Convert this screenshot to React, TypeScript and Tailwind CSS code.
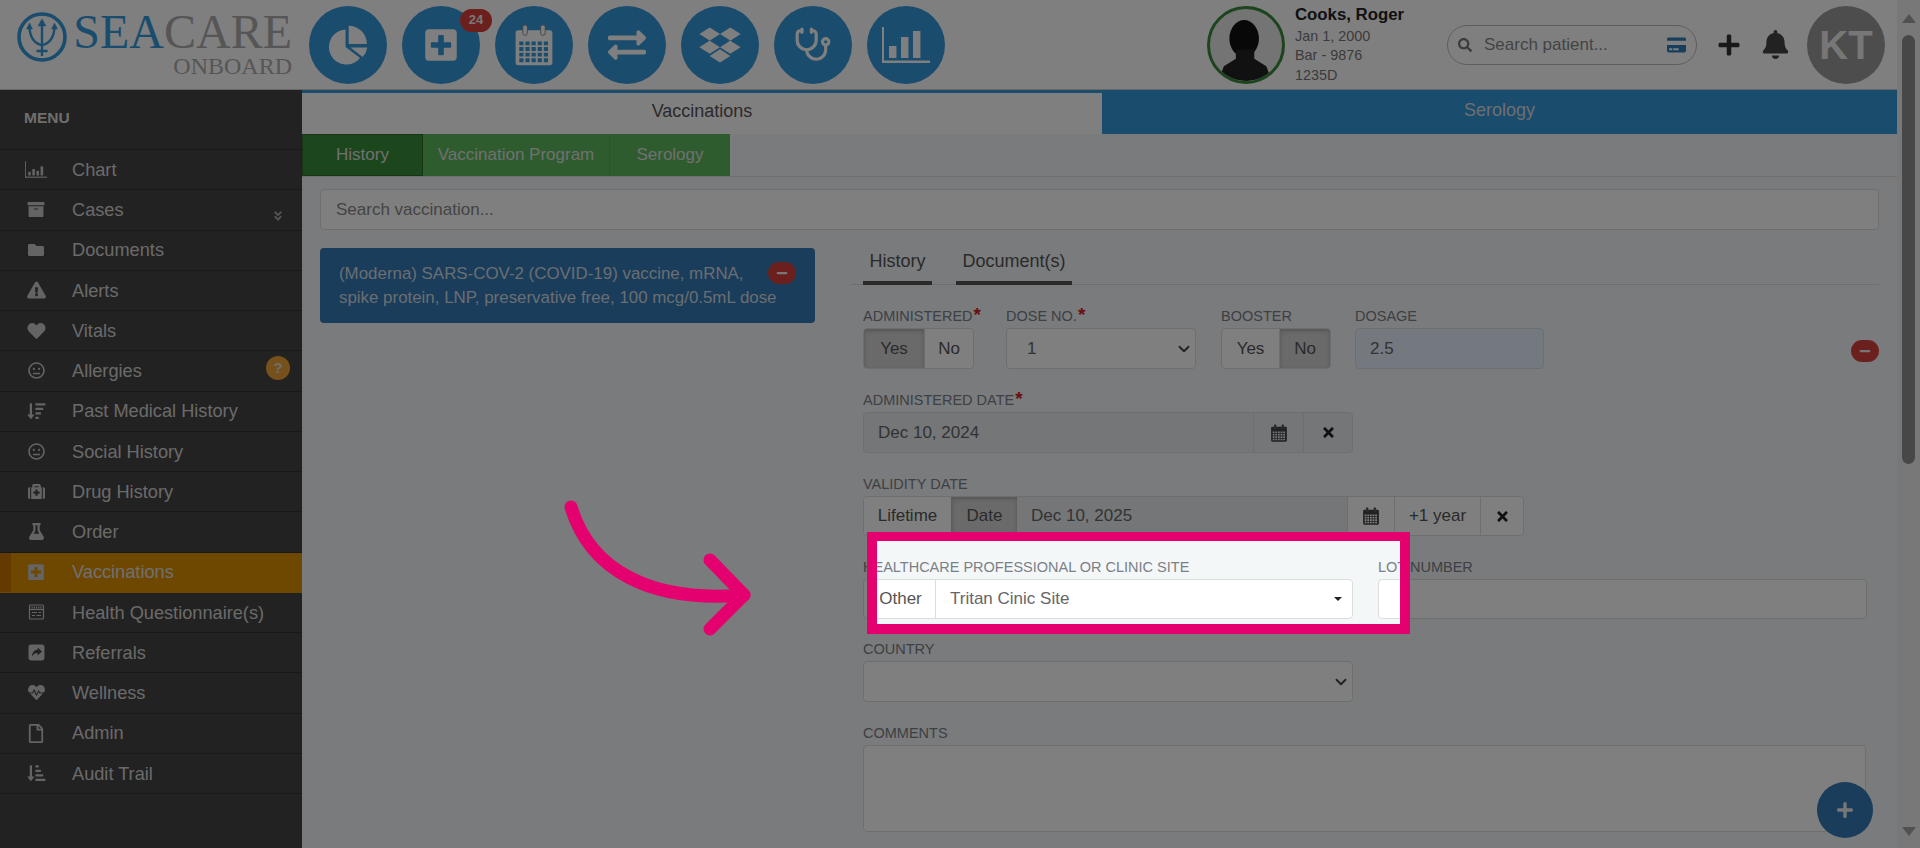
import type { ReactNode } from "react"
import { ChevronDown, Stethoscope } from "lucide-react"
import {
  FaAngleDoubleDown,
  FaArchive,
  FaBell,
  FaCreditCard,
  FaDropbox,
  FaExchangeAlt,
  FaExclamationTriangle,
  FaFlask,
  FaFolder,
  FaHeart,
  FaHeartbeat,
  FaMedkit,
  FaMinus,
  FaPlus,
  FaPlusSquare,
  FaRegFile,
  FaRegMeh,
  FaSearch,
  FaSortAmountDown,
  FaSortAmountDownAlt,
  FaTimes,
} from "react-icons/fa"

function gridHoles() {
  let d = ""
  for (let r = 0; r < 4; r++) {
    for (let c = 0; c < 5; c++) {
      const x = 3.6 + c * 3.5
      const y = 10 + r * 3.2
      d += `M${x} ${y}h2.4v2.2h-2.4z`
    }
  }
  return d
}

function CalendarIcon({ className }: { className?: string }) {
  return (
    <svg viewBox="0 0 24 24" className={className} fill="currentColor">
      <path fillRule="evenodd" d={`M3 3.5h18a1.5 1.5 0 0 1 1.5 1.5v17a1.5 1.5 0 0 1-1.5 1.5H3A1.5 1.5 0 0 1 1.5 22V5A1.5 1.5 0 0 1 3 3.5z${gridHoles()}`} />
      <rect x="5.6" y="0.5" width="2.6" height="6" rx="1.3" stroke="#888" strokeWidth="0.5" />
      <rect x="15.8" y="0.5" width="2.6" height="6" rx="1.3" stroke="#888" strokeWidth="0.5" />
    </svg>
  )
}

function PieIcon({ className }: { className?: string }) {
  return (
    <svg viewBox="0 0 24 24" className={className} fill="currentColor">
      <path d="M10.6 3.2A10 10 0 1 0 18.9 19.4L10.6 13.2Z" />
      <path d="M12.4 1A10.4 10.4 0 0 1 22.8 11.4H12.4Z" />
      <path d="M13.4 13.4H23A10.4 10.4 0 0 1 20.4 18.8Z" />
    </svg>
  )
}

function BarsIcon({ className, bars }: { className?: string; bars: number[] }) {
  const step = 36 / bars.length
  return (
    <svg viewBox="0 0 48 36" className={className} fill="currentColor">
      <rect x="0" y="0" width="2" height="36" />
      <rect x="0" y="33.5" width="48" height="2.5" />
      {bars.map((h, i) => (
        <rect key={i} x={7 + i * step} y={31 - h} width={step * 0.62} height={h} />
      ))}
    </svg>
  )
}

function FormIcon({ className }: { className?: string }) {
  return (
    <svg viewBox="0 0 16 16" className={className} fill="none" stroke="currentColor" strokeWidth="1.2">
      <rect x="1" y="1" width="14" height="14" rx="1" />
      <path d="M1 5.5h14" />
      <path d="M3 3.4h10" strokeDasharray="1.2 1" strokeWidth="2" />
      <path d="M3.5 8.5h5M10 8.5h2.5M3.5 11.5h3M8 11.5h4.5" />
    </svg>
  )
}

function ShareIcon({ className }: { className?: string }) {
  return (
    <svg viewBox="0 0 16 16" className={className}>
      <rect x="0.5" y="0.5" width="15" height="15" rx="2.5" fill="currentColor" />
      <path d="M9 3.2 13.2 7 9 10.8V8.5C6.5 8.5 5 9.5 3.8 12 3.8 8 5.8 5.6 9 5.5Z" fill="#444" />
    </svg>
  )
}

function TridentLogo() {
  return (
    <svg viewBox="0 0 50 50" className="w-[50px] h-[50px] shrink-0" fill="none" stroke="#3498db">
      <circle cx="25" cy="25" r="23" strokeWidth="3.6" />
      <path d="M25 9v35M12.5 14c0 11 5 18 12.5 19 7.5-1 12.5-8 12.5-19M19.5 39h11" strokeWidth="2.4" />
      <path d="M25 7l-4 7h8zM12.5 11l-3 6h6zM37.5 11l-3 6h6z" fill="#3498db" strokeWidth="0.5" />
    </svg>
  )
}

const navIcons: ReactNode[] = [
  <PieIcon className="w-[42px] h-[42px]" />,
  <FaPlusSquare className="w-[36px] h-[36px]" />,
  <CalendarIcon className="w-[42px] h-[42px]" />,
  <FaExchangeAlt className="w-[44px] h-[38px]" />,
  <FaDropbox className="w-[42px] h-[40px]" />,
  <Stethoscope className="w-[38px] h-[38px]" strokeWidth={2} />,
  <BarsIcon className="w-[48px] h-[36px]" bars={[12, 21, 27]} />,
]

const menu: { label: string; icon: ReactNode; active?: boolean; extra?: ReactNode }[] = [
  { label: "Chart", icon: <BarsIcon className="w-[22px] h-[17px]" bars={[8, 14, 10, 20]} /> },
  {
    label: "Cases",
    icon: <FaArchive className="w-[18px] h-[17px]" />,
    extra: <FaAngleDoubleDown className="w-[12px] h-[12px] absolute right-[18px] top-[20px] text-[#aaa]" />,
  },
  { label: "Documents", icon: <FaFolder className="w-[18px] h-[16px]" /> },
  { label: "Alerts", icon: <FaExclamationTriangle className="w-[19px] h-[18px]" /> },
  { label: "Vitals", icon: <FaHeart className="w-[19px] h-[18px]" /> },
  {
    label: "Allergies",
    icon: <FaRegMeh className="w-[17px] h-[17px]" />,
    extra: (
      <span className="absolute right-[12px] top-[5px] w-[24px] h-[24px] rounded-full bg-[#eea236] flex items-center justify-center text-[15px] font-bold text-[#ddd]">?</span>
    ),
  },
  { label: "Past Medical History", icon: <FaSortAmountDown className="w-[19px] h-[18px]" /> },
  { label: "Social History", icon: <FaRegMeh className="w-[17px] h-[17px]" /> },
  { label: "Drug History", icon: <FaMedkit className="w-[19px] h-[17px]" /> },
  { label: "Order", icon: <FaFlask className="w-[17px] h-[17px]" /> },
  { label: "Vaccinations", icon: <FaPlusSquare className="w-[18px] h-[18px]" />, active: true },
  { label: "Health Questionnaire(s)", icon: <FormIcon className="w-[17px] h-[16px]" /> },
  { label: "Referrals", icon: <ShareIcon className="w-[17px] h-[17px]" /> },
  { label: "Wellness", icon: <FaHeartbeat className="w-[19px] h-[17px]" /> },
  { label: "Admin", icon: <FaRegFile className="w-[16px] h-[19px]" /> },
  { label: "Audit Trail", icon: <FaSortAmountDownAlt className="w-[19px] h-[18px]" /> },
]

function Header() {
  return (
    <header className="h-[90px] shrink-0 bg-white flex items-center border-b border-[#ccc]">
      {/* Logo */}
      <div className="flex items-start w-[309px] pl-[17px] shrink-0">
        <TridentLogo />
        <div className="ml-[6px] font-['Liberation_Serif',serif] flex flex-col items-end w-[219px]">
          <div className="text-[48px] leading-[38px] mt-[1px] whitespace-nowrap">
            <span className="text-[#3498db]">SEA</span>
            <span className="text-[#acacac]">CARE</span>
          </div>
          <div className="text-[24px] leading-[22px] text-[#acacac] mt-[4px]">ONBOARD</div>
        </div>
      </div>

      {/* Nav circles */}
      <nav className="flex gap-[15px]">
        {navIcons.map((icon, i) => (
          <div key={i} className="relative w-[78px] h-[78px] rounded-full bg-[#3498db] text-white flex items-center justify-center">
            {icon}
            {i === 1 && (
              <span className="absolute left-[58px] top-[3px] w-[32px] h-[23px] rounded-full bg-[#d9403c] text-[#eee] text-[13px] font-bold flex items-center justify-center">24</span>
            )}
          </div>
        ))}
      </nav>

      {/* Patient */}
      <div className="ml-auto flex items-center">
        <div className="w-[78px] h-[78px] rounded-full border-[3px] border-[#3a8a3a] bg-[#e8e8e8] overflow-hidden">
          <svg viewBox="0 0 78 78" className="w-full h-full">
            <ellipse cx="37" cy="32" rx="16" ry="20" fill="#111" />
            <path d="M28 44v10L15 62l-6 16h58l-6-16-13-8V44z" fill="#222" />
          </svg>
        </div>
        <div className="ml-[10px] w-[152px] self-start">
          <div className="text-[16.8px] leading-[22px] font-bold text-[#222]">Cooks, Roger</div>
          <div className="text-[14.4px] leading-[19.5px] text-[#777] mt-[1px]">
            <div>Jan 1, 2000</div>
            <div>Bar - 9876</div>
            <div>1235D</div>
          </div>
        </div>
        <div className="w-[250px] h-[40px] rounded-full border border-[#bbb] flex items-center px-[10px]">
          <FaSearch className="w-[14px] h-[14px] text-[#777]" />
          <span className="ml-[12px] text-[17px] text-[#888]">Search patient...</span>
          <FaCreditCard className="ml-auto w-[19px] h-[18px] text-[#2f7fb8]" />
        </div>
        <FaPlus className="ml-[20px] w-[24px] h-[24px] text-[#333]" />
        <FaBell className="ml-[20px] w-[29px] h-[29px] text-[#444]" />
        <div className="ml-[17px] mr-[12px] w-[78px] h-[78px] rounded-full bg-[#9a9a9a] flex items-center justify-center text-[40px] font-bold text-[#eee]">KT</div>
      </div>
    </header>
  )
}

function Sidebar() {
  return (
    <aside className="w-[302px] shrink-0 bg-[#444]">
      <div className="h-[60px] border-b border-[#333] pl-[24px] pt-[19px] text-[15.5px] leading-[18px] font-bold text-[#ddd]">MENU</div>
      {menu.map((m) => (
        <div key={m.label} className={`relative h-[40.25px] flex items-center border-b ${m.active ? "bg-[#dd8e00] border-[#dd8e00]" : "border-[#333]"}`}>
          {m.active && <span className="absolute left-0 inset-y-0 w-[11px] bg-[#c97400]" />}
          <span className="relative w-[72px] shrink-0 flex justify-center text-[#c8c8c8]">{m.icon}</span>
          <span className={`relative text-[18.2px] pt-[2px] ${m.active ? "text-[#e0e0e0]" : "text-[#d5d5d5]"}`}>{m.label}</span>
          {m.extra}
        </div>
      ))}
    </aside>
  )
}

function Label({ children, req }: { children: ReactNode; req?: boolean }) {
  return (
    <div className="h-[21px] text-[14.5px] leading-[19px] text-[#7b8088] whitespace-nowrap uppercase">
      {children}
      {req && <span className="text-[#d32020] font-bold text-[19px] leading-[10px] ml-[1px]">*</span>}
    </div>
  )
}

function Toggle({ options, active, widths }: { options: string[]; active: string; widths: string[] }) {
  return (
    <div className="flex h-[41px] rounded-[4px] border border-[#ddd] bg-white overflow-hidden text-[17px] text-[#555]">
      {options.map((o, i) => (
        <span
          key={o}
          className={`${widths[i]} flex items-center justify-center ${i > 0 ? "border-l border-[#ddd]" : ""} ${o === active ? "bg-[#d4d4d4] shadow-[inset_0_2px_4px_rgba(0,0,0,0.2)]" : ""}`}
        >
          {o}
        </span>
      ))}
    </div>
  )
}

function Box({ className, children }: { className: string; children?: ReactNode }) {
  return <div className={`flex items-center rounded-[4px] border border-[#ddd] text-[17px] text-[#666] ${className}`}>{children}</div>
}

function VaccinationForm() {
  return (
    <div className="flex-1 min-w-0">
      <div className="h-[37px] flex border-b border-[#ddd] pl-[12px] text-[18px] text-[#555]">
        <div className="w-[69px] border-b-[4px] border-[#555] h-[37px] text-center leading-[26px]">History</div>
        <div className="w-[116px] ml-[24px] border-b-[4px] border-[#555] h-[37px] text-center leading-[26px]">Document(s)</div>
      </div>

      <div className="pl-[12px] pt-[22px] flex flex-col gap-[22px]">
        <div className="flex items-end">
          <div className="w-[111px]">
            <Label req>Administered</Label>
            <Toggle options={["Yes", "No"]} active="Yes" widths={["w-[60px]", "flex-1"]} />
          </div>
          <div className="w-[190px] ml-[32px]">
            <Label req>Dose No.</Label>
            <Box className="h-[41px] bg-white pl-[20px] pr-[2px] justify-between">
              1<ChevronDown className="w-[18px] h-[18px] text-[#444]" strokeWidth={2.5} />
            </Box>
          </div>
          <div className="w-[110px] ml-[25px]">
            <Label>Booster</Label>
            <Toggle options={["Yes", "No"]} active="No" widths={["w-[57px]", "flex-1"]} />
          </div>
          <div className="w-[189px] ml-[24px]">
            <Label>Dosage</Label>
            <Box className="h-[41px] bg-[#e8f0fe] pl-[14px] text-[#333]">2.5</Box>
          </div>
          <span className="ml-auto mb-[7px] w-[28px] h-[22px] rounded-full bg-[#d9403c] flex items-center justify-center text-[#eee]">
            <FaMinus className="w-[12px] h-[12px]" />
          </span>
        </div>

        <div className="w-[490px]">
          <Label req>Administered Date</Label>
          <Box className="h-[41px] bg-[#e9ecef]">
            <span className="flex-1 pl-[14px]">Dec 10, 2024</span>
            <span className="w-[50px] h-full flex items-center justify-center border-l border-[#ddd]">
              <CalendarIcon className="w-[18px] h-[18px] text-[#444]" />
            </span>
            <span className="w-[49px] h-full flex items-center justify-center border-l border-[#ddd]">
              <FaTimes className="w-[15px] h-[15px] text-[#222]" />
            </span>
          </Box>
        </div>

        <div className="w-[661px]">
          <Label>Validity Date</Label>
          <Box className="h-[40px] overflow-hidden bg-[#e9ecef]">
            <span className="w-[87px] h-full flex items-center justify-center bg-white text-[#555]">Lifetime</span>
            <span className="w-[66px] h-full flex items-center justify-center bg-[#d4d4d4] text-[#555] border-l border-[#bbb] shadow-[inset_0_2px_4px_rgba(0,0,0,0.2)]">Date</span>
            <span className="flex-1 pl-[14px]">Dec 10, 2025</span>
            <span className="w-[47px] h-full flex items-center justify-center border-l border-[#ddd] bg-white">
              <CalendarIcon className="w-[18px] h-[18px] text-[#444]" />
            </span>
            <span className="w-[86px] h-full flex items-center justify-center border-l border-[#ddd] bg-white text-[#555]">+1 year</span>
            <span className="flex-1 max-w-[43px] h-full flex items-center justify-center border-l border-[#ddd] bg-white">
              <FaTimes className="w-[15px] h-[15px] text-[#222]" />
            </span>
          </Box>
        </div>

        <div className="flex gap-[25px]">
          <div className="w-[490px]">
            <Label>Healthcare Professional or Clinic Site</Label>
            <Box className="h-[40px] bg-white">
              <span className="w-[72px] h-full flex items-center justify-center pl-[2px] border-r border-[#ddd] text-[#555]">Other</span>
              <span className="flex-1 pl-[14px]">Tritan Cinic Site</span>
              <span className="mr-[10px] w-0 h-0 border-x-[4px] border-x-transparent border-t-[4px] border-t-[#222]" />
            </Box>
          </div>
          <div className="w-[489px]">
            <Label>Lot Number</Label>
            <Box className="h-[40px] bg-white" />
          </div>
        </div>

        <div className="w-[490px] mt-[-1px]">
          <Label>Country</Label>
          <Box className="h-[41px] bg-white justify-end pr-[2px]">
            <ChevronDown className="w-[18px] h-[18px] text-[#444]" strokeWidth={2.5} />
          </Box>
        </div>

        <div className="w-[1003px]">
          <Label>Comments</Label>
          <Box className="h-[87px] bg-white" />
        </div>
      </div>
    </div>
  )
}

function Content() {
  return (
    <main className="flex-1 min-w-0 bg-[#f4f7f8] border-t-[3px] border-[#3498db]">
      <div className="flex h-[41px] text-[18px]">
        <div className="w-[800px] bg-white text-[#555] flex items-center justify-center pb-[5px]">Vaccinations</div>
        <div className="flex-1 bg-[#3498db] text-[#ddd] flex items-center justify-center mt-[-3px] h-[44px] pb-[3px]">Serology</div>
      </div>

      <div className="flex h-[43px] border-b border-[#ddd] text-[17px] text-[#e0e0e0]">
        <div className="w-[121px] bg-[#388c38] border border-[#2a6a2a] flex items-center justify-center">History</div>
        <div className="w-[186px] bg-[#5cb85c] flex items-center justify-center">Vaccination Program</div>
        <div className="w-[121px] bg-[#5cb85c] border-l border-[#4cae4c] flex items-center justify-center">Serology</div>
      </div>

      <div className="px-[18px]">
        <div className="mt-[12px] h-[41px] rounded-[4px] border border-[#ddd] bg-white flex items-center pl-[15px] text-[17px] text-[#888]">Search vaccination...</div>

        <div className="mt-[18px] flex gap-[36px]">
          <div className="relative w-[495px] h-[75px] shrink-0 rounded-[4px] bg-[#337ab7] text-[16.9px] leading-[24px] text-[#d5dce2] pl-[19px] pt-[14px] whitespace-nowrap">
            <div>(Moderna) SARS-COV-2 (COVID-19) vaccine, mRNA,</div>
            <div>spike protein, LNP, preservative free, 100 mcg/0.5mL dose</div>
            <span className="absolute left-[448px] top-[14px] w-[28px] h-[22px] rounded-full bg-[#d9403c] flex items-center justify-center text-[#eee]">
              <FaMinus className="w-[12px] h-[12px]" />
            </span>
          </div>
          <VaccinationForm />
        </div>
      </div>
    </main>
  )
}

function Scrollbar() {
  return (
    <div className="w-[23px] shrink-0 bg-[#f1f1f1] flex flex-col items-center">
      <span className="mt-[14px] w-0 h-0 border-x-[7px] border-x-transparent border-b-[9px] border-b-[#a3a3a3]" />
      <span className="mt-[12px] w-[13px] h-[429px] rounded-full bg-[#8f8f8f]" />
      <span className="mt-auto mb-[12px] w-0 h-0 border-x-[7px] border-x-transparent border-t-[9px] border-t-[#a3a3a3]" />
    </div>
  )
}

export default function App() {
  return (
    <div className="relative h-[848px] overflow-hidden flex font-['Liberation_Sans',Arial,sans-serif]">
      <div className="flex-1 min-w-0 flex flex-col">
        <Header />
        <div className="flex-1 min-h-0 flex overflow-hidden">
          <Sidebar />
          <Content />
        </div>
      </div>
      <Scrollbar />

      {/* floating add */}
      <span className="absolute left-[1817px] top-[782px] w-[56px] h-[56px] rounded-full bg-[#337ab7] flex items-center justify-center text-[#eee]">
        <FaPlus className="w-[18px] h-[18px]" />
      </span>

      {/* tutorial spotlight over the page */}
      <div className="absolute left-[867px] top-[532px] w-[543px] h-[102px] border-x-[10px] border-t-[9px] border-b-[10px] border-[#e5006f] shadow-[0_0_0_3000px_rgba(0,0,0,0.5)]" />
      <svg className="absolute left-[550px] top-[490px] w-[210px] h-[160px]" viewBox="550 490 210 160" fill="none" stroke="#e5006f" strokeWidth="13" strokeLinecap="round" strokeLinejoin="round">
        <path d="M571 507C590 570 650 603 744 595" />
        <path d="M710 560 744 595 710 629" />
      </svg>
    </div>
  )
}
